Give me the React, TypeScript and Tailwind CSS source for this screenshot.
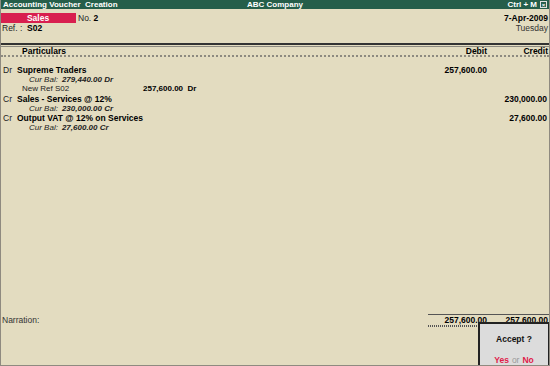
import React from "react";

const F = { fontFamily: '"Liberation Sans", Arial, sans-serif' };

function Entry({
  side,
  name,
  bal,
  debit,
  credit,
}: {
  side: string;
  name: string;
  bal: string;
  debit?: string;
  credit?: string;
}) {
  return (
    <div>
      <div className="flex h-[10px] items-center leading-none">
        <div className="w-[16px] pl-[2px] text-[8.5px] text-[#222]">{side}</div>
        <div className="flex-1 text-[8.5px] font-bold text-black">{name}</div>
        <div className="w-[58px] text-right text-[8.5px] font-bold text-black">{debit ?? ""}</div>
        <div className="w-[62px] pr-[2px] text-right text-[8.5px] font-bold text-black">{credit ?? ""}</div>
      </div>
      <div className="flex h-[9px] items-center pl-[28px] text-[8px] italic leading-none text-[#222]">
        <span>Cur Bal:</span>
        <span className="ml-[4px] font-bold">{bal}</span>
      </div>
    </div>
  );
}

export default function App() {
  return (
    <div
      style={F}
      className="relative flex h-[366px] w-[550px] flex-col overflow-hidden border-b border-l border-r border-[#8f8a80] bg-[#e3dcc0] text-black"
    >
      {/* Title bar */}
      <div className="relative -mx-[1px] flex h-[9px] items-center bg-[#255e4a] px-[3px] text-[8px] font-bold leading-none text-white">
        <div className="flex-1">Accounting Voucher&nbsp; Creation</div>
        <div className="absolute left-[247px] top-[1px]">ABC Company</div>
        <div className="flex items-center gap-[3px]">
          <span>Ctrl + M</span>
          <span className="flex h-[7px] w-[7px] items-center justify-center border border-[#e0e0e0] text-[6px] leading-none">
            ×
          </span>
        </div>
      </div>

      {/* Header */}
      <div className="mt-[4px] flex h-[10px] items-center leading-none">
        <div className="-ml-[1px] flex h-[10px] w-[76px] items-center justify-center bg-[#d81f4f] text-[8.5px] font-bold text-white">
          Sales
        </div>
        <div className="ml-[2px] flex-1 text-[8.5px] text-[#222]">
          No. <span className="font-bold text-black">2</span>
        </div>
        <div className="pr-[1px] text-[8.5px] font-bold">7-Apr-2009</div>
      </div>
      <div className="flex h-[10px] items-center leading-none">
        <div className="ml-[1px] flex-1 text-[8.5px] text-[#222]">
          Ref. :&nbsp; <span className="font-bold text-black">S02</span>
        </div>
        <div className="pr-[1px] text-[8.5px] text-[#333]">Tuesday</div>
      </div>

      {/* Column header */}
      <div className="mt-[10px] h-[2px] bg-[#333]" />
      <div className="mt-[1px] h-[1px] bg-[#8d8a80]" />
      <div className="flex h-[8px] items-center text-[8.5px] font-bold leading-none">
        <div className="flex-1 pl-[21px]">Particulars</div>
        <div className="w-[58px] text-right">Debit</div>
        <div className="w-[62px] pr-[1px] text-right">Credit</div>
      </div>
      <div className="h-[2px] border-t-2 border-dotted border-[#8d8a80]" />

      {/* Entries */}
      <div className="mt-[8px]">
        <div>
          <div className="flex h-[10px] items-center leading-none">
            <div className="w-[16px] pl-[2px] text-[8.5px] text-[#222]">Dr</div>
            <div className="flex-1 text-[8.5px] font-bold">Supreme Traders</div>
            <div className="w-[58px] text-right text-[8.5px] font-bold">257,600.00</div>
            <div className="w-[62px]" />
          </div>
          <div className="flex h-[9px] items-center pl-[28px] text-[8px] italic leading-none text-[#222]">
            <span>Cur Bal:</span>
            <span className="ml-[4px] font-bold">279,440.00 Dr</span>
          </div>
          <div className="flex h-[10px] items-center pl-[21px] text-[8px] leading-none text-[#222]">
            <span className="w-[33px]">New Ref</span>
            <span className="w-[88px]">S02</span>
            <span className="font-bold text-black">257,600.00&nbsp; Dr</span>
          </div>
        </div>
        <Entry side="Cr" name="Sales - Services @ 12%" bal="230,000.00 Cr" credit="230,000.00" />
        <Entry side="Cr" name="Output VAT @ 12% on Services" bal="27,600.00 Cr" credit="27,600.00" />
      </div>

      <div className="flex-1" />

      {/* Totals & narration */}
      <div className="flex">
        <div className="flex-1" />
        <div className="h-[1px] w-[121px] bg-[#555]" />
      </div>
      <div className="flex h-[10px] items-center leading-none">
        <div className="flex-1 pl-[1px] text-[8.5px] text-[#333]">Narration:</div>
        <div className="w-[58px] text-right text-[8.5px] font-bold">257,600.00</div>
        <div className="w-[62px] pr-[1px] text-right text-[8.5px] font-bold">257,600.00</div>
      </div>
      <div className="flex">
        <div className="flex-1" />
        <div className="h-[2px] w-[121px] border-y border-dotted border-[#555]" />
      </div>
      <div className="h-[38px]" />

      {/* Accept popup */}
      <div className="absolute left-[477px] top-[322px] flex h-[46px] w-[72px] flex-col items-center border-2 border-[#222] bg-[#dcdcdc] leading-none">
        <div className="mt-[11px] text-[8.5px] font-bold text-[#111]">Accept ?</div>
        <div className="mt-[12px] text-[8.5px]">
          <span className="font-bold text-[#e0204a]">Yes</span>
          <span className="mx-[3px] text-[#999]">or</span>
          <span className="font-bold text-[#e0204a]">No</span>
        </div>
      </div>
    </div>
  );
}
